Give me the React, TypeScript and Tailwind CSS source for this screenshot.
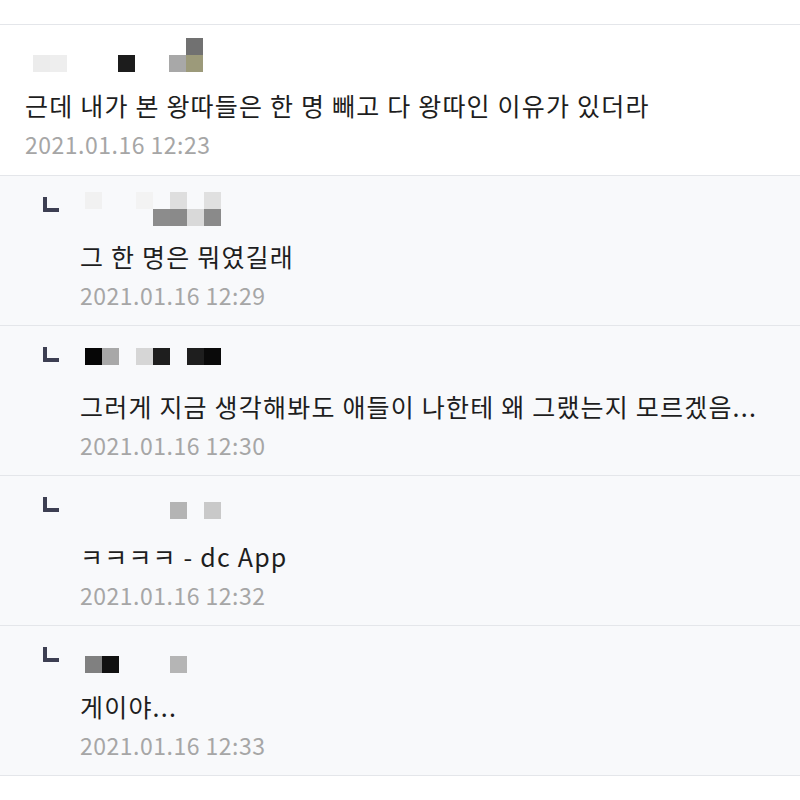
import React from "react";

type Cell = { col: number; row: number; color: string };

type Comment = {
  id: number;
  reply: boolean;
  mosaicTop: string;
  mosaic: Cell[];
  text: string;
  date: string;
};

const comments: Comment[] = [
  {
    id: 1,
    reply: false,
    mosaicTop: "pt-[13px]",
    mosaic: [
      { col: 0, row: 1, color: "#ececec" },
      { col: 1, row: 1, color: "#eeeeee" },
      { col: 5, row: 1, color: "#1c1c1c" },
      { col: 8, row: 1, color: "#a8a8a8" },
      { col: 9, row: 0, color: "#717171" },
      { col: 9, row: 1, color: "#9c9a7a" },
    ],
    text: "근데 내가 본 왕따들은 한 명 빼고 다 왕따인 이유가 있더라",
    date: "2021.01.16 12:23",
  },
  {
    id: 2,
    reply: true,
    mosaicTop: "pt-[16px]",
    mosaic: [
      { col: 0, row: 0, color: "#f1f1f1" },
      { col: 3, row: 0, color: "#f3f3f3" },
      { col: 5, row: 0, color: "#dedede" },
      { col: 7, row: 0, color: "#e0e0e0" },
      { col: 4, row: 1, color: "#8c8c8c" },
      { col: 5, row: 1, color: "#8a8a8a" },
      { col: 6, row: 1, color: "#d9d9d9" },
      { col: 7, row: 1, color: "#8a8a8a" },
    ],
    text: "그 한 명은 뭐였길래",
    date: "2021.01.16 12:29",
  },
  {
    id: 3,
    reply: true,
    mosaicTop: "pt-[22px]",
    mosaic: [
      { col: 0, row: 0, color: "#060606" },
      { col: 1, row: 0, color: "#a8a8a8" },
      { col: 3, row: 0, color: "#d6d6d6" },
      { col: 4, row: 0, color: "#1e1e1e" },
      { col: 6, row: 0, color: "#1e1e1e" },
      { col: 7, row: 0, color: "#0a0a0a" },
    ],
    text: "그러게 지금 생각해봐도 애들이 나한테 왜 그랬는지 모르겠음...",
    date: "2021.01.16 12:30",
  },
  {
    id: 4,
    reply: true,
    mosaicTop: "pt-[26px]",
    mosaic: [
      { col: 5, row: 0, color: "#b4b4b4" },
      { col: 7, row: 0, color: "#c9c9c9" },
    ],
    text: "ㅋㅋㅋㅋ - dc App",
    date: "2021.01.16 12:32",
  },
  {
    id: 5,
    reply: true,
    mosaicTop: "pt-[30px]",
    mosaic: [
      { col: 0, row: 0, color: "#808080" },
      { col: 1, row: 0, color: "#111111" },
      { col: 5, row: 0, color: "#b5b5b5" },
    ],
    text: "게이야...",
    date: "2021.01.16 12:33",
  },
];

// blurred-out nickname, drawn as a grid of 17px cells
function Mosaic({ cells }: { cells: Cell[] }) {
  return (
    <div className="grid grid-cols-[repeat(10,17px)] grid-rows-[repeat(2,17px)] blur-[0.6px]">
      {cells.map((c, i) => (
        <div
          key={i}
          style={{ gridColumn: c.col + 1, gridRow: c.row + 1, backgroundColor: c.color }}
        />
      ))}
    </div>
  );
}

function CommentRow({ c }: { c: Comment }) {
  return (
    <div
      className={`flex border-b border-[#e4e6ea] ${
        c.reply ? "h-[150px] bg-[#f8f9fb] pl-[43px]" : "h-[151px] bg-white pl-[25px]"
      }`}
    >
      {c.reply && (
        <div className="w-[37px] shrink-0 pt-[21px]">
          <div className="w-[16px] h-[15px] border-l-[4px] border-b-[4px] border-[#3d3f52] rounded-bl-[1px]" />
        </div>
      )}
      <div className="flex flex-col">
        <div className={`h-[64px] ${c.reply ? "pl-[5px]" : "pl-[8px]"} ${c.mosaicTop}`}>
          <Mosaic cells={c.mosaic} />
        </div>
        <p className="text-[25px] leading-[32px] text-[#1e1e1e] tracking-[1.2px] whitespace-nowrap">
          {c.text}
        </p>
        <p className="mt-[9px] text-[23px] leading-[28px] text-[#a6a6a6] tracking-[0.5px]">
          {c.date}
        </p>
      </div>
    </div>
  );
}

export default function App() {
  return (
    <div
      className="w-[800px] h-[800px] bg-white overflow-hidden"
      style={{ fontFamily: '"Noto Sans CJK KR", "Noto Sans", sans-serif' }}
    >
      <div className="mt-[24px] border-t border-[#e4e6ea]">
        {comments.map((c) => (
          <CommentRow key={c.id} c={c} />
        ))}
      </div>
    </div>
  );
}
